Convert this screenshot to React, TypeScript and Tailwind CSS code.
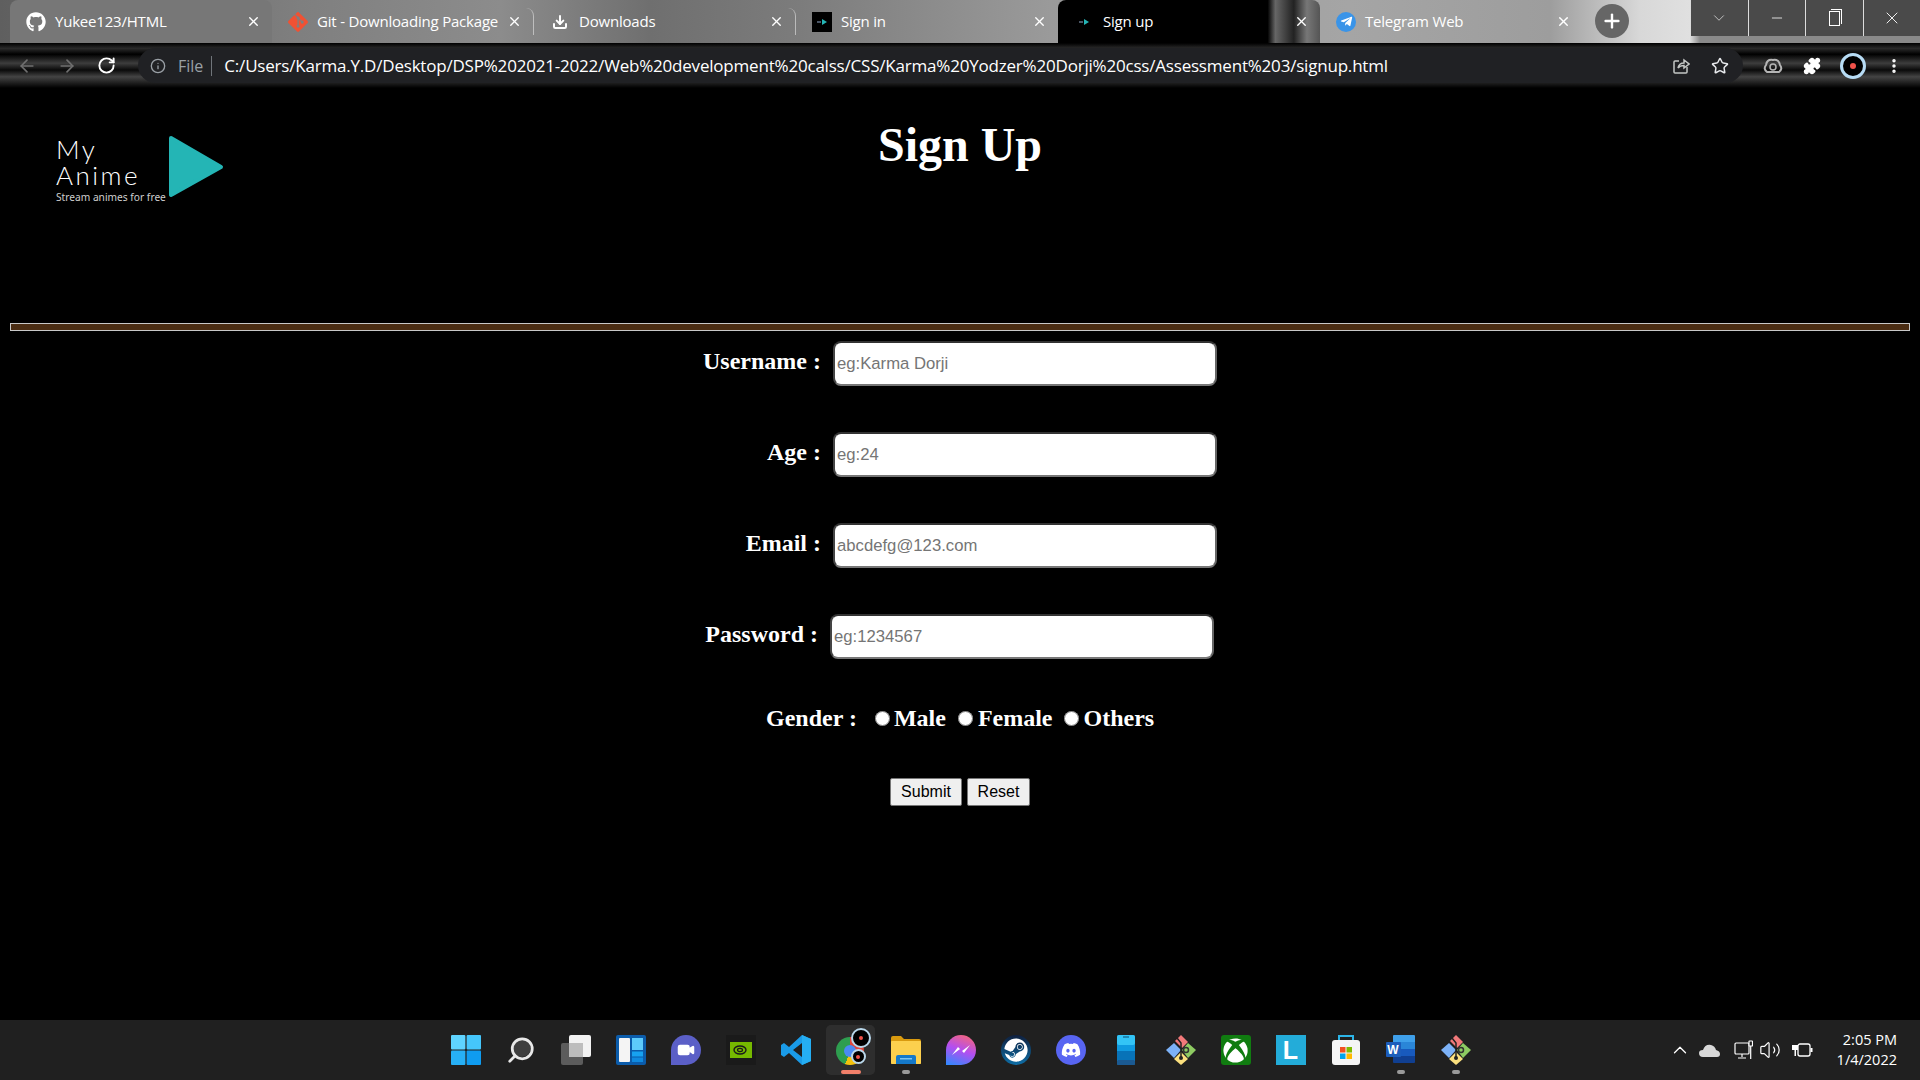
import { ArrowLeft, ArrowRight, RotateCw, Info, Star, Puzzle, X, Plus, ChevronDown, ChevronUp, Minus, Download, Search, Video, Volume2, MoreVertical } from 'lucide-react';
import { FaGithub, FaTelegramPlane, FaDiscord, FaSteam, FaXbox } from 'react-icons/fa';
import { SiGit } from 'react-icons/si';

const tabs = [
  { title: 'Yukee123/HTML', icon: <FaGithub size={20} className="text-white" />, bg: '' },
  { title: 'Git - Downloading Package', icon: <SiGit size={20} className="text-[#f05133]" />, bg: '' },
  { title: 'Downloads', icon: <Download size={16} className="text-white" strokeWidth={3} />, bg: '' },
  { title: 'Sign in', icon: <MiniLogo />, bg: '' },
  { title: 'Sign up', icon: <MiniLogo />, bg: 'active' },
  {
    title: 'Telegram Web',
    icon: (
      <span className="w-[20px] h-[20px] rounded-full bg-[#3a94e8] flex items-center justify-center">
        <FaTelegramPlane size={13} className="text-white" />
      </span>
    ),
    bg: ''
  }
];

function MiniLogo() {
  return (
    <span className="w-[20px] h-[20px] bg-black flex items-center justify-center gap-[1px]">
      <span className="w-[4px] h-[2px] bg-gray-600"></span>
      <svg width="5" height="6" viewBox="0 0 5 6"><polygon points="0,0 5,3 0,6" fill="#24b5b5" /></svg>
    </span>
  );
}

function WinIcon() {
  return (
    <svg width="30" height="30" viewBox="0 0 30 30">
      <rect x="0" y="0" width="14.4" height="14.4" rx="1" fill="#5fd4ff" />
      <rect x="15.6" y="0" width="14.4" height="14.4" rx="1" fill="#45c6fb" />
      <rect x="0" y="15.6" width="14.4" height="14.4" rx="1" fill="#27b0f6" />
      <rect x="15.6" y="15.6" width="14.4" height="14.4" rx="1" fill="#0f9cf0" />
    </svg>
  );
}

function SearchIcon() {
  return (
    <span className="relative block w-[30px] h-[30px]">
      <span className="absolute left-[6px] top-[3px] w-[19px] h-[19px] rounded-full bg-[#3e3e3e]"></span>
      <Search size={30} className="relative text-[#e8e8e8] -scale-x-100" strokeWidth={2.2} />
    </span>
  );
}

function TaskViewIcon() {
  return (
    <svg width="30" height="30" viewBox="0 0 30 30">
      <rect x="0" y="8" width="22" height="22" rx="2" fill="#5c5c5c" />
      <rect x="8" y="0" width="22" height="22" rx="2" fill="#f2f2f2" />
      <rect x="8" y="8" width="14" height="14" fill="#bdbdbd" />
    </svg>
  );
}

function WidgetsIcon() {
  return (
    <svg width="30" height="30" viewBox="0 0 30 30">
      <rect width="30" height="30" rx="2" fill="#0b5cab" />
      <rect x="3" y="3" width="11" height="24" rx="1" fill="#f4f4f4" />
      <rect x="16" y="3" width="11" height="12" fill="#5dcbfb" />
      <rect x="16" y="16.5" width="11" height="5" fill="#17a2f0" />
      <rect x="16" y="22.5" width="11" height="4.5" fill="#0f8ae0" />
    </svg>
  );
}

function ChatIcon() {
  return (
    <span className="relative w-[30px] h-[30px] rounded-full rounded-bl-none bg-[#5b5fc7] flex items-center justify-center">
      <Video size={18} className="text-white" fill="white" />
    </span>
  );
}

function NvidiaIcon() {
  return (
    <span className="w-[30px] h-[30px] bg-[#1a1a1a] flex items-center justify-center">
      <span className="w-[22px] h-[16px] bg-[#76b900] flex items-center justify-center">
        <svg width="16" height="10" viewBox="0 0 16 10">
          <ellipse cx="7" cy="5" rx="6" ry="4" fill="none" stroke="#1a1a1a" strokeWidth="1.4" />
          <ellipse cx="7" cy="5" rx="2.5" ry="1.6" fill="none" stroke="#1a1a1a" strokeWidth="1.2" />
        </svg>
      </span>
    </span>
  );
}

function VsCodeIcon() {
  return (
    <svg width="30" height="30" viewBox="0 0 30 30">
      <path d="M21 0 L30 4 V26 L21 30 L8 18 L3 22 L0 20 V10 L3 8 L8 12 Z M21 8 L12 15 L21 22 Z" fill="#1a9be8" fillRule="evenodd" />
      <path d="M21 0 L30 4 V26 L21 30 Z M21 8 V22 L21 22 Z" fill="#25aef3" />
    </svg>
  );
}

function Lens({ size }: { size: number }) {
  return (
    <span className="rounded-full bg-black border-2 border-[#b9d7ea] flex items-center justify-center" style={{ width: size, height: size }}>
      <span className="w-[4px] h-[4px] rounded-full bg-[#f0524a]"></span>
    </span>
  );
}

function ChromeIcon() {
  return (
    <span className="relative w-[30px] h-[30px] block">
      <span className="absolute left-0 top-[2px] w-[28px] h-[28px] rounded-full bg-[conic-gradient(#e0473b_0deg,#e0473b_110deg,#f4c20d_110deg,#f4c20d_200deg,#2e9e4f_200deg,#2e9e4f_360deg)]"></span>
      <span className="absolute left-[8px] top-[10px] w-[12px] h-[12px] rounded-full bg-[#4a8af4]"></span>
      <span className="absolute left-[15px] top-[-7px]"><Lens size={20} /></span>
      <span className="absolute left-[15px] top-[14px]"><Lens size={15} /></span>
    </span>
  );
}

function FolderIcon() {
  return (
    <svg width="30" height="30" viewBox="0 0 30 30">
      <path d="M0 3 Q0 1 2 1 H10 L13 4 H28 Q30 4 30 6 V28 Q30 29 28 29 H2 Q0 29 0 28 Z" fill="#d99a0f" />
      <rect x="0" y="6" width="30" height="23" rx="1" fill="#fcd04e" />
      <path d="M5 29 V22 Q5 20 7 20 H23 Q25 20 25 22 V29 Z" fill="#1579c9" />
      <rect x="9" y="23" width="12" height="1.5" fill="#7cc4f2" />
    </svg>
  );
}

function MessengerIcon() {
  return (
    <span className="w-[30px] h-[30px] rounded-full rounded-bl-none bg-[linear-gradient(200deg,#ff6a6a,#b44ef0_50%,#2b8cff)] flex items-center justify-center">
      <svg width="20" height="14" viewBox="0 0 20 14"><path d="M1 12 L7 4 L11 8 L19 2 L13 10 L9 6 Z" fill="white" /></svg>
    </span>
  );
}

function PhoneIcon() {
  return (
    <svg width="30" height="30" viewBox="0 0 30 30">
      <rect x="6" y="0" width="18" height="30" rx="2" fill="#0f9ae0" />
      <rect x="6" y="0" width="18" height="10" rx="2" fill="#33c4f6" />
      <rect x="6" y="16" width="18" height="9" fill="#0873b8" />
      <rect x="6" y="25" width="18" height="5" rx="1" fill="#1b5a92" />
      <rect x="12" y="1.5" width="6" height="1" fill="#0b4c73" />
    </svg>
  );
}

function GitGuiIcon() {
  return (
    <svg width="30" height="30" viewBox="0 0 30 30">
      <polygon points="8,8 15,15 8,23 0,15" fill="#7db2f7" />
      <polygon points="15,0 22,7 16,13 9,6" fill="#f2797a" />
      <polygon points="22,8 30,15 22,23 16,15" fill="#8ecb62" />
      <polygon points="15,17 22,24 15,30 8,24" fill="#fbe07e" />
      <path d="M11 3 L15 8 V24" stroke="#222" strokeWidth="1.5" fill="none" />
      <circle cx="15" cy="23" r="2" fill="#222" />
      <circle cx="20" cy="15" r="2.5" fill="none" stroke="#333" strokeWidth="1.5" />
    </svg>
  );
}

function StoreIcon() {
  return (
    <svg width="30" height="30" viewBox="0 0 30 30">
      <path d="M8 5 V1 H22 V5" fill="none" stroke="#2cb5e8" strokeWidth="2" />
      <rect x="1" y="5" width="28" height="25" rx="3" fill="#f5f5f5" />
      <rect x="9" y="12" width="5.5" height="5.5" fill="#f25022" />
      <rect x="15.5" y="12" width="5.5" height="5.5" fill="#7fba00" />
      <rect x="9" y="18.5" width="5.5" height="5.5" fill="#00a4ef" />
      <rect x="15.5" y="18.5" width="5.5" height="5.5" fill="#ffb900" />
    </svg>
  );
}

function WordIcon() {
  return (
    <span className="relative block w-[30px] h-[30px]">
      <span className="absolute left-[7px] top-0 w-[22px] h-[28px] bg-[linear-gradient(#3fa0ea_0_25%,#2a86d8_25%_50%,#185abd_50%_75%,#103f91_75%)] rounded-[1px]"></span>
      <span className="absolute left-0 top-[7px] w-[15px] h-[15px] bg-[#1c5dbb] rounded-[1px] flex items-center justify-center text-white text-[12px] font-bold leading-none [font-family:'Liberation_Sans',sans-serif]">W</span>
    </span>
  );
}

const taskIcons = [
  { node: <WinIcon /> },
  { node: <SearchIcon /> },
  { node: <TaskViewIcon /> },
  { node: <WidgetsIcon /> },
  { node: <ChatIcon /> },
  { node: <NvidiaIcon /> },
  { node: <VsCodeIcon /> },
  { node: <ChromeIcon />, active: true },
  { node: <FolderIcon />, dot: true },
  { node: <MessengerIcon /> },
  { node: <span className="w-[30px] h-[30px] rounded-full bg-[linear-gradient(#0f1f3d,#0e6ea6)] flex items-center justify-center"><FaSteam size={24} className="text-white" /></span> },
  { node: <span className="w-[30px] h-[30px] rounded-full bg-[#5865f2] flex items-center justify-center"><FaDiscord size={20} className="text-white" /></span> },
  { node: <PhoneIcon /> },
  { node: <GitGuiIcon /> },
  { node: <span className="w-[30px] h-[30px] rounded-[3px] bg-[#107c10] flex items-center justify-center"><FaXbox size={25} className="text-white" /></span> },
  { node: <span className="w-[30px] h-[30px] bg-[#23acd9] flex items-center justify-center text-white text-[25px] font-bold leading-none [font-family:'Liberation_Sans',sans-serif]">L</span> },
  { node: <StoreIcon /> },
  { node: <WordIcon />, dot: true },
  { node: <GitGuiIcon />, dot: true }
];

const fields = [
  { label: 'Username :', placeholder: 'eg:Karma Dorji', type: 'text' },
  { label: 'Age :', placeholder: 'eg:24', type: 'text' },
  { label: 'Email :', placeholder: 'abcdefg@123.com', type: 'email' },
  { label: 'Password :', placeholder: 'eg:1234567', type: 'password' }
];

export default function App() {
  return (
    <div className="w-[1920px] h-[1080px] overflow-hidden flex flex-col bg-black text-white [font-family:'Open_Sans',sans-serif]">
      {/* tab strip */}
      <div className="h-[43px] shrink-0 flex bg-[linear-gradient(90deg,#5f5f5f_0,#7f7f7f_300px,#8c8c8c_500px,#6f6f6f_650px,#7c7c7c_800px,#9a9a9a_1050px,#a5a5a5_1350px,#9d9d9d_1550px,#d8d8d8_1640px,#e0e0e0_1690px,#8a8a8a_1700px)]">
        <div className="flex pl-[10px]">
          {tabs.map((tab, i) => (
            <div
              key={tab.title}
              className={`w-[262px] flex items-center pl-[16px] pr-[11px] rounded-t-lg ${
                tab.bg === 'active'
                  ? 'bg-[linear-gradient(90deg,#000_0,#000_80%,#666_83%,#222_90%,#777_95%,#555_100%)]'
                  : i === 0
                  ? 'bg-[#777777]'
                  : ''
              } ${i === 1 || i === 2 ? 'border-r border-[#d5d5d5]/70 my-[8px] rounded-none' : ''}`}
            >
              <span className="w-[20px] flex justify-center shrink-0">{tab.icon}</span>
              <span className="ml-[9px] text-[15px] text-white flex-1 whitespace-nowrap tracking-[-0.2px]">{tab.title}</span>
              <X size={15} className="text-white" strokeWidth={2.2} />
            </div>
          ))}
        </div>
        <div className="ml-[13px] mt-[4px] w-[34px] h-[34px] rounded-full bg-[#666666] flex items-center justify-center">
          <Plus size={22} className="text-white" strokeWidth={2.6} />
        </div>
        <div className="ml-auto w-[229px] h-[36px] flex bg-[#4a4a4a]">
          <div className="flex-1 flex items-center justify-center border-r border-[#dddddd]"><ChevronDown size={18} className="text-[#cccccc]" strokeWidth={1.2} /></div>
          <div className="flex-1 flex items-center justify-center border-r border-[#dddddd]"><Minus size={16} className="text-white" strokeWidth={1.2} /></div>
          <div className="flex-1 flex items-center justify-center border-r border-[#dddddd]">
            <span className="relative w-[11px] h-[15px] border border-white"><span className="absolute -top-[3px] -right-[3px] w-[11px] h-[15px] border-t border-r border-white"></span></span>
          </div>
          <div className="w-[56px] flex items-center justify-center"><X size={20} className="text-white" strokeWidth={1.1} /></div>
        </div>
      </div>

      {/* toolbar */}
      <div className="h-[45px] shrink-0 flex items-center bg-[linear-gradient(180deg,#000_0,#2a2a2a_12%,#000_25%,#3d3d3d_45%,#0a0a0a_60%,#444_75%,#000_100%)]">
        <div className="w-[138px] flex items-center pl-[17px] gap-[20px]">
          <ArrowLeft size={20} className="text-[#6f6f6f]" />
          <ArrowRight size={20} className="text-[#6f6f6f]" />
          <RotateCw size={19} className="text-white" strokeWidth={2.4} />
        </div>
        <div className="w-[1605px] h-[35px] rounded-full bg-[#202124] flex items-center pl-[12px] pr-[14px]">
          <Info size={16} className="text-[#9aa0a6]" />
          <span className="ml-[12px] text-[16px] text-[#9aa0a6]">File</span>
          <span className="ml-[8px] w-[1px] h-[20px] bg-[#70757a]"></span>
          <span className="ml-[12px] text-[17px] text-white whitespace-nowrap tracking-[-0.2px]">
            C:/Users/Karma.Y.D/Desktop/DSP%202021-2022/Web%20development%20calss/CSS/Karma%20Yodzer%20Dorji%20css/Assessment%203/signup.html
          </span>
          <span className="ml-auto flex items-center gap-[21px]">
            <svg width="18" height="18" viewBox="0 0 18 18" fill="none" stroke="#c4c7c5" strokeWidth="1.5">
              <path d="M15 10 V15 Q15 16 14 16 H3 Q2 16 2 15 V5 Q2 4 3 4 H7" />
              <path d="M6 11 Q7 6 12 6 V3 L17 7 L12 11 V8.5 Q8 8.5 6 11 Z" />
            </svg>
            <Star size={18} className="text-[#e8eaed]" />
          </span>
        </div>
        <div className="flex-1 flex items-center pl-[20px] gap-[20px]">
          <svg width="20" height="18" viewBox="0 0 20 18"><path d="M4 15 Q0 12 3 8 Q4 2 10 3 Q16 2 17 8 Q20 12 16 15 Z" fill="none" stroke="#b5b5b5" strokeWidth="2" /><circle cx="10" cy="10" r="3" fill="none" stroke="#b5b5b5" strokeWidth="1.5" /></svg>
          <Puzzle size={18} className="text-white" fill="white" />
          <span className="w-[26px] h-[26px] rounded-full bg-black border-[3px] border-[#b7dcf5] flex items-center justify-center -mx-[1px]">
            <span className="w-[6px] h-[6px] rounded-full bg-[#f0524a]"></span>
          </span>
          <MoreVertical size={18} className="text-white" strokeWidth={2.6} />
        </div>
      </div>

      {/* page */}
      <div className="flex-1 bg-black [font-family:'Liberation_Serif',serif]">
        <div className="h-[235px] relative pt-[29px]">
          <div className="absolute left-[56px] top-[48px] w-[170px] h-[70px]">
            <div className="[font-family:'Lato',sans-serif] font-light text-[26px] leading-[26px] tracking-[2.5px] text-white">
              <div>My</div>
              <div>Anime</div>
            </div>
            <div className="text-[10.2px] leading-[12px] mt-[3px] text-[#cfcfcf] whitespace-nowrap [font-family:'Noto_Sans',sans-serif]">Stream animes for free</div>
            <svg className="absolute left-[112px] -top-[1px]" width="56" height="64" viewBox="0 0 56 64">
              <polygon points="3,3 53,32 3,60" fill="#24b5b5" stroke="#24b5b5" strokeWidth="4" strokeLinejoin="round" />
            </svg>
          </div>
          <h1 className="text-[48px] leading-[55px] font-bold text-center">Sign Up</h1>
        </div>

        <div className="mx-[10px] h-[8px] bg-[#4a2c12] border border-[#c8c8c8]"></div>

        <form className="pt-[10px]">
          {fields.map((field, i) => (
            <div key={field.label} className={`h-[45px] flex items-center mb-[46px] ml-[681px] ${i === 3 ? '-translate-x-[3px]' : ''}`}>
              <label className="w-[140px] text-right text-[24px] font-bold leading-none -mt-[6px] whitespace-nowrap">{field.label}</label>
              <input
                type="text"
                placeholder={field.placeholder}
                className="ml-[12px] w-[384px] h-[45px] rounded-lg bg-white pl-[2px] text-[16.7px] text-black placeholder:text-[#757575] outline-none border-2 border-t-[#333333] border-l-[#444444] border-r-[#666666] border-b-[#777777] [font-family:'Liberation_Sans',sans-serif]"
              />
            </div>
          ))}

          <div className="flex items-center ml-[766px] h-[30px] -mt-[2px] text-[24px] font-bold leading-none">
            <span>Gender :</span>
            <input type="radio" name="gender" className="ml-[18px] w-[15px] h-[15px] m-0" />
            <span className="ml-[4px]">Male</span>
            <input type="radio" name="gender" className="ml-[12px] w-[15px] h-[15px] m-0" />
            <span className="ml-[5px]">Female</span>
            <input type="radio" name="gender" className="ml-[11px] w-[15px] h-[15px] m-0" />
            <span className="ml-[5px]">Others</span>
          </div>

          <div className="flex ml-[890px] mt-[45px] gap-[5px] [font-family:'Liberation_Sans',sans-serif]">
            <button type="button" className="w-[72px] h-[28px] bg-[#efefef] border border-[#767676] rounded-[2px] text-black text-[16px]">Submit</button>
            <button type="button" className="w-[63px] h-[28px] bg-[#efefef] border border-[#767676] rounded-[2px] text-black text-[16px]">Reset</button>
          </div>
        </form>
      </div>

      {/* taskbar */}
      <div className="h-[60px] shrink-0 bg-[#202020] flex items-center pl-[438px]">
        {taskIcons.map((item, i) => (
          <div key={i} className="relative w-[55px] h-[50px] flex items-center justify-center">
            {item.active && <span className="absolute left-[3px] right-[3px] top-0 bottom-0 bg-[#2e2e2e] rounded-[5px]"></span>}
            <span className="relative">{item.node}</span>
            {item.active && <span className="absolute left-[18px] bottom-[1px] w-[20px] h-[4px] rounded-full bg-[#f2806a]"></span>}
            {item.dot && <span className="absolute left-[24px] bottom-[1px] w-[8px] h-[4px] rounded-full bg-[#9a9a9a]"></span>}
          </div>
        ))}
        <div className="ml-auto flex items-center pr-[23px] text-white">
          <ChevronUp size={22} strokeWidth={1.4} />
          <svg className="ml-[8px]" width="21" height="13" viewBox="0 0 21 13"><path d="M4 13 Q0 13 0 9 Q0 6 4 6 Q6 0 12 1 Q16 2 17 6 Q21 7 21 10 Q21 13 18 13 Z" fill="#d8d8d8" /></svg>
          <svg className="ml-[14px]" width="19" height="20" viewBox="0 0 19 20" fill="none" stroke="white" strokeWidth="1.2">
            <rect x="1" y="3" width="14" height="11" rx="1" />
            <path d="M8 14 V17 M4 18 H12" />
            <rect x="15" y="1" width="3.5" height="5" rx="0.5" fill="#202020" />
            <path d="M16.7 6 V19" />
          </svg>
          <Volume2 size={22} className="ml-[6px]" strokeWidth={1.3} />
          <svg className="ml-[10px]" width="22" height="16" viewBox="0 0 22 16">
            <rect x="7" y="2" width="12" height="12" rx="2" fill="none" stroke="white" strokeWidth="1.3" />
            <rect x="19.5" y="6" width="2" height="4" fill="white" />
            <rect x="1" y="3" width="6" height="5" fill="white" />
            <rect x="3.5" y="8" width="1.5" height="6" fill="white" />
          </svg>
          <div className="ml-[24px] text-[14.5px] leading-[20px] text-right [font-family:'Open_Sans',sans-serif]">
            <div>2:05 PM</div>
            <div>1/4/2022</div>
          </div>
        </div>
      </div>
    </div>
  );
}
